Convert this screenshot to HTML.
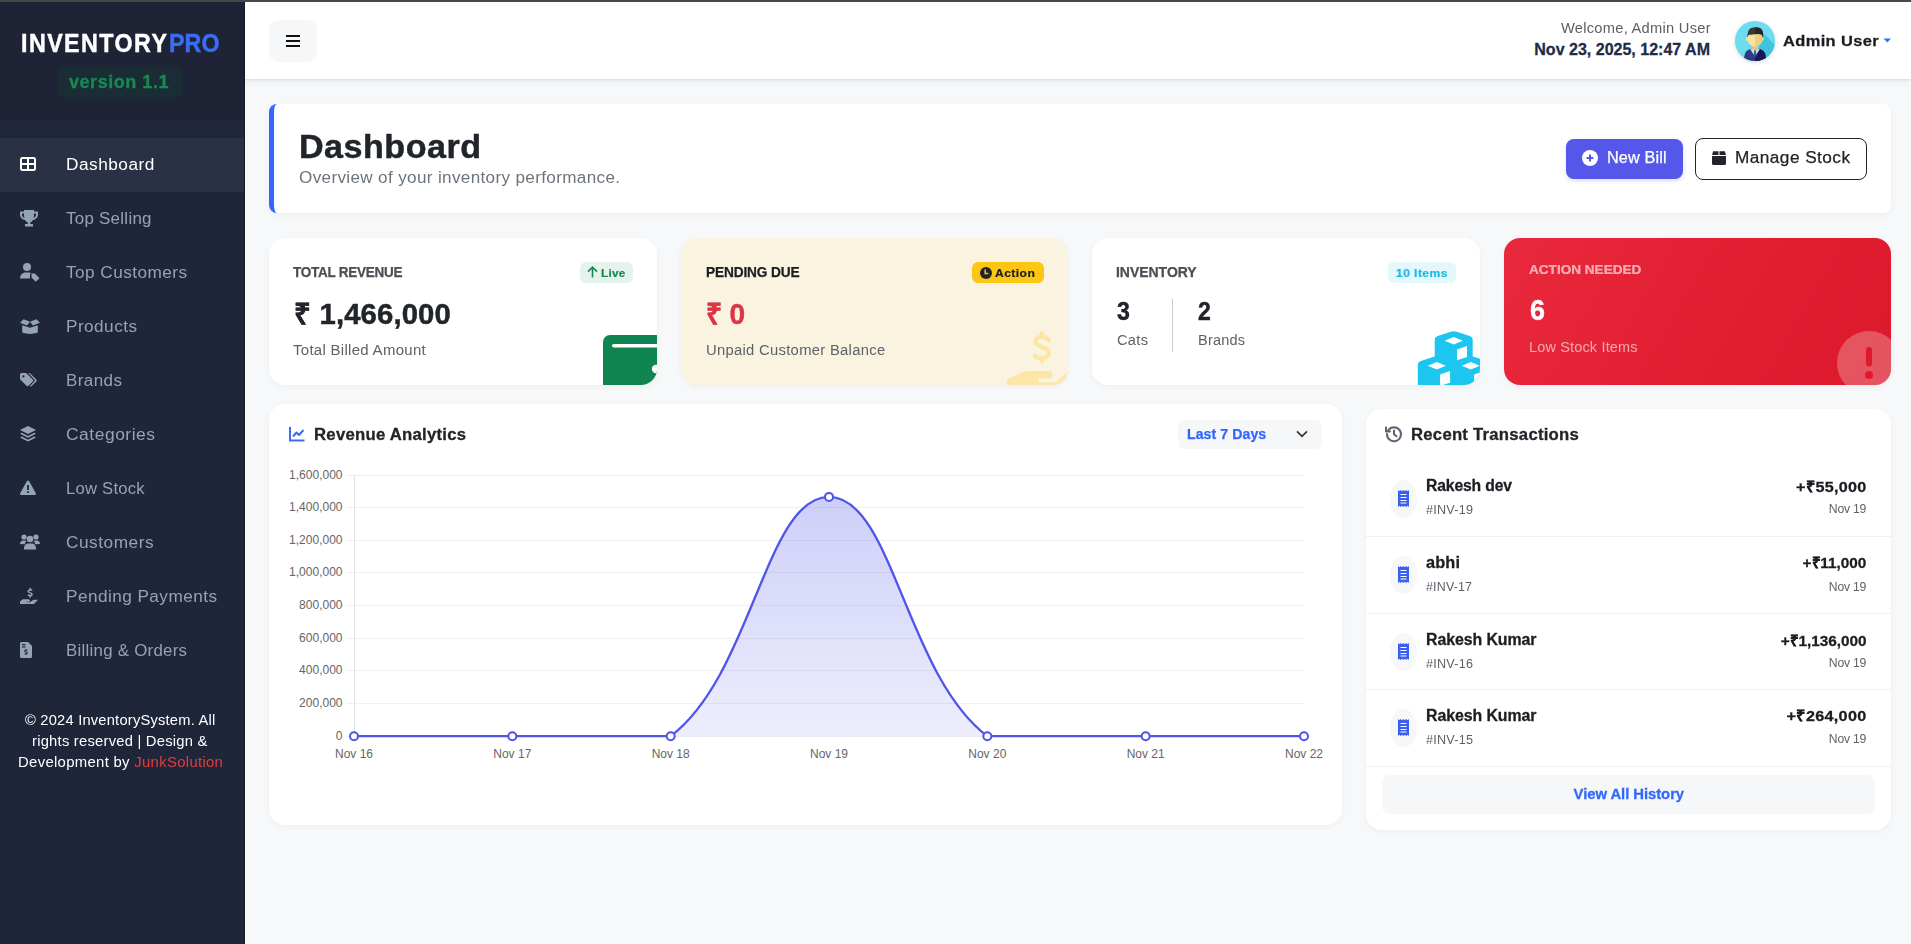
<!DOCTYPE html>
<html><head><meta charset="utf-8">
<style>
*{box-sizing:border-box;margin:0;padding:0}
html,body{width:1911px;height:944px;overflow:hidden;background:#f7f8fa;font-family:"Liberation Sans",sans-serif}
.t{position:absolute;white-space:nowrap;line-height:1;z-index:5}
.b{position:absolute}
#topbar{position:absolute;left:0;top:0;width:1911px;height:2px;background:#474747;z-index:10}
#side{position:absolute;left:0;top:2px;width:245px;height:942px;background:#1f263a;box-shadow:inset -1px 0 0 #141a2c}
#hdr{position:absolute;left:245px;top:2px;width:1666px;height:77px;background:#fff;box-shadow:0 1px 2px rgba(0,0,0,.09),0 3px 9px rgba(0,0,0,.05)}
.card{position:absolute;background:#fff;border-radius:16px;box-shadow:0 2px 6px rgba(0,0,0,.045);overflow:hidden}
svg{position:absolute;display:block;overflow:visible}
</style></head><body>
<div id="topbar"></div>

<!-- SIDEBAR -->
<div id="side"></div>
<div class="b" style="left:0;top:2px;width:244px;height:119px;background:#1e2336"></div>
<div class="b" style="left:0;top:121px;width:244px;height:17px;background:#20273a"></div>
<div class="b" style="left:0;top:138px;width:244px;height:54px;background:#2a3144"></div>
<div class="b" style="left:57px;top:67px;width:126px;height:30px;border-radius:6px;background:#1a2d34"></div>
<svg style='left:20px;top:157px' width='16' height='14' viewBox='0 0 16 14'><rect x='1' y='1' width='14' height='12' rx='1.5' stroke='#fff' stroke-width='2' fill='none'/><path d='M8 1V13M1 7H15' stroke='#fff' stroke-width='2'/></svg>
<svg style='left:20px;top:209.5px' width='18' height='17' viewBox='0 0 18 17' fill='#94a3b8'><path d='M4 0H14V1.5H18V4.5C18 7.5 15.8 9.6 13 10 12.2 11.5 11 12.2 10.2 12.4V14H13V16.5H5V14H7.8V12.4C7 12.2 5.8 11.5 5 10 2.2 9.6 0 7.5 0 4.5V1.5H4ZM2 3.5V4.5C2 6 3 7.5 4.4 7.9 4.1 6.5 4 5 4 3.5ZM16 3.5H14C14 5 13.9 6.5 13.6 7.9 15 7.5 16 6 16 4.5Z'/></svg>
<svg style='left:20px;top:263px' width='20' height='19' viewBox='0 0 20 19' fill='#94a3b8'><circle cx='7' cy='4' r='4'/><path d='M0 15.5C0 12 2.5 9.5 5.5 9.5H9C9.8 9.5 10.5 9.7 11.2 10L10 11.2V15.5ZM11.5 10.5L14.8 10.5 19.5 15.2 15.8 18.8 11.5 14.5Z'/></svg>
<svg style='left:20px;top:318.5px' width='20' height='15' viewBox='0 0 20 15' fill='#94a3b8'><path d='M2.2 6.3L10 8.8 17.8 6.3V12.8Q17.8 13.8 16.8 14.1L10 15 3.2 14.1Q2.2 13.8 2.2 12.8Z'/><path d='M0 3.8L3.6 0.3 10 2.8 7 6.6Z M20 3.8L16.4 0.3 10 2.8 13 6.6Z'/></svg>
<svg style='left:19.8px;top:372.8px' width='17' height='14.5' viewBox='0 0 17 14.5' fill='#94a3b8'><path d='M0 1.5A1.5 1.5 0 0 1 1.5 0H6.2L13 6.8Q13.7 7.5 13 8.2L8.2 13Q7.5 13.7 6.8 13L0 6.2Z'/><path d='M8.3 0H9.8L16.3 6.6Q17.1 7.5 16.3 8.4L10.9 13.8 10 12.9 15.1 7.5Z'/><circle cx='3.4' cy='3.4' r='1.1' fill='#1f263a'/></svg>
<svg style='left:20px;top:426px' width='16' height='16' viewBox='0 0 16 16' fill='#94a3b8'><path d='M8 0L16 4 8 8 0 4Z'/><path d='M1.8 6.8L8 9.9 14.2 6.8 16 7.8 8 11.8 0 7.8Z'/><path d='M1.8 10.6L8 13.7 14.2 10.6 16 11.6 8 15.6 0 11.6Z'/></svg>
<svg style='left:20px;top:480px' width='16' height='15' viewBox='0 0 16 15' fill='#94a3b8'><path d='M8 0.5C8.5 0.5 8.9 0.8 9.2 1.3L15.8 13.2C16.3 14 15.7 15 14.8 15H1.2C0.3 15-0.3 14 0.2 13.2L6.8 1.3C7.1 0.8 7.5 0.5 8 0.5Z'/><rect x='7.1' y='5' width='1.8' height='5' fill='#1f263a'/><rect x='7.1' y='11.2' width='1.8' height='1.8' fill='#1f263a'/></svg>
<svg style='left:20px;top:534px' width='20' height='16' viewBox='0 0 20 16' fill='#94a3b8'><circle cx='4' cy='3' r='2.6'/><circle cx='16' cy='3' r='2.6'/><circle cx='10' cy='5' r='3.3'/><path d='M0 10C0 8 1.3 6.6 3 6.6H5C5.6 6.6 6 6.8 6.4 7 5.5 7.8 5 9 5 10.2Z M15 10.2C15 9 14.5 7.8 13.6 7 14 6.8 14.5 6.6 15 6.6H17C18.7 6.6 20 8 20 10Z M4 14.5C4 11.7 5.8 9.5 8 9.5H12C14.2 9.5 16 11.7 16 14.5V15.5H4Z'/></svg>
<svg style='left:20px;top:588px' width='18' height='16' viewBox='0 0 18 16' fill='#94a3b8'><path d='M9.3 0.7a0.9 0.9 0 0 1 1.8 0v0.6c0.6 0.1 1 0.3 1.4 0.5l-0.5 1.3c-0.7-0.3-1.5-0.5-2-0.4-0.6 0.1-0.9 0.3-0.9 0.7 0 0.4 0.4 0.6 1.4 0.9 1.1 0.3 2.2 0.7 2.2 2.1 0 1-0.7 1.6-1.6 1.8v0.6a0.9 0.9 0 0 1-1.8 0v-0.6c-0.6-0.1-1.2-0.3-1.7-0.5l0.5-1.4c0.6 0.3 1.4 0.5 2 0.5 0.7 0 1-0.3 1-0.6 0-0.4-0.4-0.6-1.3-0.9-1.1-0.3-2.3-0.7-2.3-2.1 0-1 0.7-1.6 1.8-1.8z'/><path d='M0 13.5L2.8 11.2H8.5C9.3 11.2 10 11.8 10 12.5 10 13.2 9.3 13.8 8.5 13.8H6.5L6.5 14.2H9.8L13.5 11.8 18 11.8 14 16H0Z'/></svg>
<svg style='left:20px;top:642px' width='12' height='16' viewBox='0 0 12 16' fill='#94a3b8'><path d='M1.5 0H8L12 4V14.5A1.5 1.5 0 0 1 10.5 16H1.5A1.5 1.5 0 0 1 0 14.5V1.5A1.5 1.5 0 0 1 1.5 0Z'/><g fill='#1f263a'><rect x='2' y='2' width='3.5' height='1.2'/><rect x='2' y='4.3' width='3.5' height='1.2'/><path d='M5.6 7h0.9v0.6c0.4 0.1 0.7 0.2 1 0.3l-0.3 1c-0.4-0.2-0.9-0.3-1.2-0.3-0.4 0-0.6 0.2-0.6 0.4 0 0.3 0.3 0.4 0.9 0.6 0.8 0.2 1.5 0.5 1.5 1.4 0 0.7-0.5 1.1-1.3 1.3v0.6h-0.9v-0.6c-0.4-0.1-0.9-0.2-1.2-0.4l0.3-1c0.4 0.2 1 0.4 1.3 0.4 0.5 0 0.7-0.2 0.7-0.4 0-0.3-0.3-0.4-0.9-0.6-0.8-0.2-1.5-0.5-1.5-1.4 0-0.7 0.5-1.1 1.3-1.3z'/></g></svg>

<!-- HEADER -->
<div id="hdr"></div>
<div class="b" style="left:269px;top:20px;width:48px;height:42px;border-radius:10px;background:#f6f7f9"></div>
<div class="b" style="left:286px;top:34.5px;width:14px;height:2px;background:#111"></div>
<div class="b" style="left:286px;top:39.5px;width:14px;height:2px;background:#111"></div>
<div class="b" style="left:286px;top:44.5px;width:14px;height:2px;background:#111"></div>
<svg style='left:1735px;top:21px;filter:drop-shadow(0 1px 2px rgba(0,0,0,.15))' width='40' height='40' viewBox='0 0 40 40'>
<defs><clipPath id='avc'><circle cx='20' cy='20' r='20'/></clipPath></defs>
<g clip-path='url(#avc)'>
<rect width='40' height='40' fill='#6cdcee'/>
<path d='M25 9L46 30V46H22Z' fill='#3ec4db'/>
<path d='M9 40C9 32 11 29.5 15 28.3L20 27 25 28.3C29 29.5 31 32 31 40Z' fill='#2e3a84'/>
<path d='M20 27L25 28.3C29 29.5 31 32 31 40H20Z' fill='#1c1856'/>
<path d='M15.3 28.4L20 26.6 24.7 28.4 20 35.5Z' fill='#c5e2ea'/>
<path d='M19.2 29H20.8L21.3 34.5 20 36.5 18.7 34.5Z' fill='#3a5aa6'/>
<path d='M17.3 23H23V28.2L20 29.6 17.3 28.2Z' fill='#f0bf78'/>
<circle cx='12.8' cy='18' r='1.9' fill='#fbe39b'/><circle cx='27.2' cy='18' r='1.9' fill='#ebcf86'/>
<path d='M13 15.5C13 11.5 16 9.5 20 9.5 24 9.5 27 11.5 27 15.5V19C27 22.5 24 25.5 20 25.5 16 25.5 13 22.5 13 19Z' fill='#fbe39b'/>
<path d='M20 9.5C24 9.5 27 11.5 27 15.5V19C27 22.5 24 25.5 20 25.5Z' fill='#ebcf86'/>
<path d='M12.6 16.5C12.2 11 14 7.5 17 6.8 19 6 22 6 24 6.8 27.5 8 28.5 11 28 16.5L27 14C25.5 13 23 12.8 20 13.2 17 13.6 14.5 13.6 13.5 14Z' fill='#373737'/>
<path d='M20 6.2C21.5 6.2 23 6.4 24 6.8 27.5 8 28.5 11 28 16.5L27 14C25.5 13 23 12.8 20 13.2Z' fill='#262626'/>
</g></svg>
<svg style="left:1883px;top:38px" width="9" height="5" viewBox="0 0 9 5"><path d="M0.5 0.5 L8 0.5 L4.25 4.5Z" fill="#3a6cf4"/></svg>

<!-- PAGE HEADER -->
<div class="card" style="left:269px;top:104px;width:1622px;height:109px;border-radius:8px;border-left:5px solid #3366ff"></div>
<div class="b" style="left:1566px;top:139px;width:117px;height:40px;border-radius:8px;background:#5457e9;box-shadow:0 2px 4px rgba(84,87,233,.2)"></div>
<svg style="left:1582px;top:150px" width="16" height="16" viewBox="0 0 16 16"><circle cx="8" cy="8" r="8" fill="#fff"/><path d="M8 4.6v6.8M4.6 8h6.8" stroke="#5457e9" stroke-width="2"/></svg>
<div class="b" style="left:1695px;top:138px;width:172px;height:42px;border-radius:8px;border:1.3px solid #212529;background:#fff"></div>
<svg style="left:1712px;top:151px" width="14" height="14" viewBox="0 0 14 14"><path d="M0 5h14v7.5a1.5 1.5 0 0 1-1.5 1.5h-11A1.5 1.5 0 0 1 0 12.5z" fill="#212529"/><path d="M1.2 0.2h5.3v3.8H0z M7.5 0.2h5.3L14 4H7.5z" fill="#212529"/></svg>

<!-- STAT CARDS -->
<div class="card" style="left:269px;top:238px;width:388px;height:147px">
  <svg style="left:334px;top:97px" width="60" height="52" viewBox="0 0 60 52"><path d="M7 0H60V52H0V7A7 7 0 0 1 7 0Z" fill="#0f8552"/><rect x="9" y="9" width="51" height="3.5" rx="1.75" fill="#fff"/><circle cx="53" cy="34" r="4.2" fill="#fff"/></svg>
</div>
<div class="card" style="left:681px;top:238px;width:387px;height:147px;background:#faf3e0">
  <svg style="left:0;top:0" width="387" height="147" viewBox="0 0 387 147"><g stroke="#fbe6a6" stroke-width="4.4" fill="none" stroke-linecap="round"><path d="M367.6 102.2C365.8 99.8 363.3 98.6 360.8 98.6 357.2 98.6 354.6 100.6 354.6 103.6 354.6 106.8 357.6 107.9 361 108.9 364.8 110 367.8 111.4 367.8 115 367.8 118.2 364.8 120.2 361 120.2 358.2 120.2 355.6 119.2 353.8 117.6"/><path d="M361 95.4V98.6M361 120.2V123.6"/></g><path d="M345 133.1H367.5A3.75 3.75 0 0 1 367.5 140.6H357.5V144.6H374.6L387 133.5V147H326V141.3Z" fill="#fbe6a6"/></svg>
</div>
<div class="card" style="left:1092px;top:238px;width:388px;height:147px">
  <svg style='left:0;top:0' width='388' height='147' viewBox='0 0 388 147'><path d='M342.7 102Q342.7 99 345.7 98L358.7 93.7Q361.7 92.7 364.7 93.7L377.7 98Q380.7 99 380.7 102V124L361.7 133L342.7 124Z' fill='#1cc6ef'/><path d='M352.7 102.8L361.7 99L370.7 102.8L361.7 106.6Z M365.0 111.6L375.0 107.9V119.8L365.0 122.8Z' fill='#fff'/><path d='M325.8 127Q325.8 124 328.8 123L341.8 118.7Q344.8 117.7 347.8 118.7L360.8 123Q363.8 124 363.8 127V149L344.8 158L325.8 149Z' fill='#1cc6ef'/><path d='M359.8 127Q359.8 124 362.8 123L375.8 118.7Q378.8 117.7 381.8 118.7L394.8 123Q397.8 124 397.8 127V149L378.8 158L359.8 149Z' fill='#1cc6ef'/><path d='M335.8 127.8L344.8 124L353.8 127.8L344.8 131.6Z M348.1 136.6L358.1 132.9V144.8L348.1 147.8Z' fill='#fff'/><path d='M369.8 127.8L378.8 124L387.8 127.8L378.8 131.6Z M382.1 136.6L392.1 132.9V144.8L382.1 147.8Z' fill='#fff'/></svg>
</div>
<div class="card" style="left:1504px;top:238px;width:387px;height:147px;background:linear-gradient(120deg,#e9293d 0%,#e21e31 55%,#dc1a2c 100%)">
  <svg style="left:333px;top:93px" width="64" height="64" viewBox="0 0 64 64"><circle cx="32" cy="32" r="32" fill="rgba(255,255,255,.25)"/><rect x="29" y="16" width="6" height="19.5" rx="3" fill="#dc1a2c"/><circle cx="32" cy="44" r="4" fill="#dc1a2c"/></svg>
</div>
<div class="b" style="left:580px;top:262px;width:53px;height:21px;border-radius:6px;background:#e4f3ec"></div>
<svg style="left:587px;top:266px" width="11" height="12" viewBox="0 0 11 12"><path d="M5.5 1.2V11.5M1 5.6L5.5 1.2 10 5.6" stroke="#198754" stroke-width="1.6" fill="none"/></svg>
<div class="b" style="left:972px;top:262px;width:72px;height:21px;border-radius:6px;background:#fdc612"></div>
<svg style="left:980px;top:266.5px" width="12" height="12" viewBox="0 0 12 12"><circle cx="6" cy="6" r="6" fill="#212529"/><path d="M5.2 2.5V6.6H8.2" stroke="#fdc612" stroke-width="1.5" fill="none"/></svg>
<div class="b" style="left:1388px;top:262px;width:68px;height:21px;border-radius:6px;background:#e4f7fc"></div>
<div class="b" style="left:1172px;top:299px;width:1px;height:53px;background:#c9ccd1"></div>

<!-- CHART -->
<div class="card" style="left:269px;top:404px;width:1073px;height:421px"></div>
<svg style="left:289px;top:426px" width="16" height="16" viewBox="0 0 16 16"><path d="M1 1V14.5H15.5" stroke="#3a6cf4" stroke-width="2" fill="none"/><path d="M4 10.5L7.5 6.5 10 9 14.5 4" stroke="#3a6cf4" stroke-width="2" fill="none" stroke-linejoin="round"/></svg>
<div class="b" style="left:1178px;top:420px;width:144px;height:29px;border-radius:6px;background:#f6f7f9"></div>
<svg style="left:1296px;top:430px" width="12" height="8" viewBox="0 0 12 8"><path d="M1 1.3L6 6.3 11 1.3" stroke="#333" stroke-width="1.7" fill="none"/></svg>
<svg style='left:0;top:0;z-index:3' width='1911' height='944' viewBox='0 0 1911 944'>
<defs><linearGradient id='fg' x1='0' y1='0' x2='0' y2='1' gradientUnits='objectBoundingBox'><stop offset='0' stop-color='#4f53e6' stop-opacity='.28'/><stop offset='1' stop-color='#4f53e6' stop-opacity='.1'/></linearGradient></defs>
<path d='M346 475.5 H1304' stroke='#edf0f5' stroke-width='1'/>
<path d='M346 507.5 H1304' stroke='#edf0f5' stroke-width='1'/>
<path d='M346 540.5 H1304' stroke='#edf0f5' stroke-width='1'/>
<path d='M346 572.5 H1304' stroke='#edf0f5' stroke-width='1'/>
<path d='M346 605.5 H1304' stroke='#edf0f5' stroke-width='1'/>
<path d='M346 638.5 H1304' stroke='#edf0f5' stroke-width='1'/>
<path d='M346 670.5 H1304' stroke='#edf0f5' stroke-width='1'/>
<path d='M346 703.5 H1304' stroke='#edf0f5' stroke-width='1'/>
<path d='M346 736.5 H1304' stroke='#edf0f5' stroke-width='1'/>
<path d='M354.5 475 V736.7' stroke='#e1e3e6' stroke-width='1'/>
<path d='M354.00 736.20 C417.33 736.20 449.00 736.20 512.33 736.20 C575.67 736.20 625.63 736.20 670.67 736.20 C752.29 674.51 765.67 496.88 829.00 496.88 C892.33 496.88 905.70 674.51 987.33 736.20 C1032.37 736.20 1082.33 736.20 1145.66 736.20 C1209.00 736.20 1240.66 736.20 1304.00 736.20 L1304.00 736.2 L354.00 736.2 Z' fill='url(#fg)'/>
<path d='M354.00 736.20 C417.33 736.20 449.00 736.20 512.33 736.20 C575.67 736.20 625.63 736.20 670.67 736.20 C752.29 674.51 765.67 496.88 829.00 496.88 C892.33 496.88 905.70 674.51 987.33 736.20 C1032.37 736.20 1082.33 736.20 1145.66 736.20 C1209.00 736.20 1240.66 736.20 1304.00 736.20' stroke='#4f55e8' stroke-width='2.3' fill='none'/>
<circle cx='354.00' cy='736.20' r='4' fill='#fff' stroke='#4f53e6' stroke-width='2'/>
<circle cx='512.33' cy='736.20' r='4' fill='#fff' stroke='#4f53e6' stroke-width='2'/>
<circle cx='670.67' cy='736.20' r='4' fill='#fff' stroke='#4f53e6' stroke-width='2'/>
<circle cx='829.00' cy='496.88' r='4' fill='#fff' stroke='#4f53e6' stroke-width='2'/>
<circle cx='987.33' cy='736.20' r='4' fill='#fff' stroke='#4f53e6' stroke-width='2'/>
<circle cx='1145.66' cy='736.20' r='4' fill='#fff' stroke='#4f53e6' stroke-width='2'/>
<circle cx='1304.00' cy='736.20' r='4' fill='#fff' stroke='#4f53e6' stroke-width='2'/>
</svg>
<div class='t' style='right:1568.5px;top:468.5px;font-size:12px;color:#666'>1,600,000</div>
<div class='t' style='right:1568.5px;top:501.1px;font-size:12px;color:#666'>1,400,000</div>
<div class='t' style='right:1568.5px;top:533.8px;font-size:12px;color:#666'>1,200,000</div>
<div class='t' style='right:1568.5px;top:566.4px;font-size:12px;color:#666'>1,000,000</div>
<div class='t' style='right:1568.5px;top:599.0px;font-size:12px;color:#666'>800,000</div>
<div class='t' style='right:1568.5px;top:631.6px;font-size:12px;color:#666'>600,000</div>
<div class='t' style='right:1568.5px;top:664.2px;font-size:12px;color:#666'>400,000</div>
<div class='t' style='right:1568.5px;top:696.9px;font-size:12px;color:#666'>200,000</div>
<div class='t' style='right:1568.5px;top:729.5px;font-size:12px;color:#666'>0</div>
<div class='t' style='left:294.0px;width:120px;text-align:center;top:747.5px;font-size:12px;color:#666'>Nov 16</div>
<div class='t' style='left:452.3px;width:120px;text-align:center;top:747.5px;font-size:12px;color:#666'>Nov 17</div>
<div class='t' style='left:610.7px;width:120px;text-align:center;top:747.5px;font-size:12px;color:#666'>Nov 18</div>
<div class='t' style='left:769.0px;width:120px;text-align:center;top:747.5px;font-size:12px;color:#666'>Nov 19</div>
<div class='t' style='left:927.3px;width:120px;text-align:center;top:747.5px;font-size:12px;color:#666'>Nov 20</div>
<div class='t' style='left:1085.7px;width:120px;text-align:center;top:747.5px;font-size:12px;color:#666'>Nov 21</div>
<div class='t' style='left:1244.0px;width:120px;text-align:center;top:747.5px;font-size:12px;color:#666'>Nov 22</div>

<!-- TRANSACTIONS -->
<div class="card" style="left:1366px;top:409px;width:525px;height:421px"></div>
<svg style="left:1385px;top:425px" width="18" height="18" viewBox="0 0 18 18"><path d="M3.3 5.2A7 7 0 1 1 2 9" stroke="#5b6470" stroke-width="2" fill="none" stroke-linecap="round"/><path d="M1 2.5V6.5H5" stroke="#5b6470" stroke-width="2" fill="none" stroke-linecap="round" stroke-linejoin="round"/><path d="M9 5.5V9.3L11.5 11.3" stroke="#5b6470" stroke-width="2" fill="none" stroke-linecap="round"/></svg>
<div class='b' style='left:1390px;top:479.5px;width:27px;height:38px;border-radius:50%;background:#f6f7f9'></div>
<svg style='left:1398px;top:489.5px' width='11' height='17' viewBox='0 0 11 17'><path d='M0 0L1.4 1.2 2.75 0 4.1 1.2 5.5 0 6.9 1.2 8.25 0 9.6 1.2 11 0V17L9.6 15.8 8.25 17 6.9 15.8 5.5 17 4.1 15.8 2.75 17 1.4 15.8 0 17Z' fill='#3a5ef0'/><path d='M2.5 4.5H8.5M2.5 7.5H8.5M2.5 10.5H8.5M2.5 13H8.5' stroke='#fff' stroke-width='1.2'/></svg>
<div class='b' style='left:1366px;top:536px;width:525px;height:1px;background:#eef1f4'></div>
<div class='b' style='left:1390px;top:556px;width:27px;height:38px;border-radius:50%;background:#f6f7f9'></div>
<svg style='left:1398px;top:566px' width='11' height='17' viewBox='0 0 11 17'><path d='M0 0L1.4 1.2 2.75 0 4.1 1.2 5.5 0 6.9 1.2 8.25 0 9.6 1.2 11 0V17L9.6 15.8 8.25 17 6.9 15.8 5.5 17 4.1 15.8 2.75 17 1.4 15.8 0 17Z' fill='#3a5ef0'/><path d='M2.5 4.5H8.5M2.5 7.5H8.5M2.5 10.5H8.5M2.5 13H8.5' stroke='#fff' stroke-width='1.2'/></svg>
<div class='b' style='left:1366px;top:613px;width:525px;height:1px;background:#eef1f4'></div>
<div class='b' style='left:1390px;top:632.5px;width:27px;height:38px;border-radius:50%;background:#f6f7f9'></div>
<svg style='left:1398px;top:642.5px' width='11' height='17' viewBox='0 0 11 17'><path d='M0 0L1.4 1.2 2.75 0 4.1 1.2 5.5 0 6.9 1.2 8.25 0 9.6 1.2 11 0V17L9.6 15.8 8.25 17 6.9 15.8 5.5 17 4.1 15.8 2.75 17 1.4 15.8 0 17Z' fill='#3a5ef0'/><path d='M2.5 4.5H8.5M2.5 7.5H8.5M2.5 10.5H8.5M2.5 13H8.5' stroke='#fff' stroke-width='1.2'/></svg>
<div class='b' style='left:1366px;top:689px;width:525px;height:1px;background:#eef1f4'></div>
<div class='b' style='left:1390px;top:709px;width:27px;height:38px;border-radius:50%;background:#f6f7f9'></div>
<svg style='left:1398px;top:719px' width='11' height='17' viewBox='0 0 11 17'><path d='M0 0L1.4 1.2 2.75 0 4.1 1.2 5.5 0 6.9 1.2 8.25 0 9.6 1.2 11 0V17L9.6 15.8 8.25 17 6.9 15.8 5.5 17 4.1 15.8 2.75 17 1.4 15.8 0 17Z' fill='#3a5ef0'/><path d='M2.5 4.5H8.5M2.5 7.5H8.5M2.5 10.5H8.5M2.5 13H8.5' stroke='#fff' stroke-width='1.2'/></svg>
<div class='b' style='left:1366px;top:766px;width:525px;height:1px;background:#eef1f4'></div>
<div class="b" style="left:1382px;top:775px;width:493px;height:39px;border-radius:8px;background:#f6f7f9"></div>

<div class='t' style='top:30.8px;font-size:25px;font-weight:700;color:#ffffff;letter-spacing:1.563px;-webkit-text-stroke:0.45px #ffffff;transform:scaleX(0.9300);left:20.5px;transform-origin:0 0;'>INVENTORY</div>
<div class='t' style='top:30.8px;font-size:25px;font-weight:700;color:#3a6cf4;letter-spacing:0.057px;-webkit-text-stroke:0.45px #3a6cf4;transform:scaleX(0.9300);left:168.6px;transform-origin:0 0;'>PRO</div>
<div class='t' style='top:71.9px;font-size:19px;font-weight:700;color:#198754;letter-spacing:0.546px;-webkit-text-stroke:0.34px #198754;transform:scaleX(0.9500);left:69.0px;transform-origin:0 0;'>version 1.1</div>
<div class='t' style='top:156.5px;font-size:16px;font-weight:500;color:#ffffff;letter-spacing:0.470px;transform:scaleX(1.0776);left:65.8px;transform-origin:0 0;'>Dashboard</div>
<div class='t' style='top:210.5px;font-size:16px;font-weight:400;color:#94a3b8;letter-spacing:0.274px;transform:scaleX(1.0553);left:65.5px;transform-origin:0 0;'>Top Selling</div>
<div class='t' style='top:264.5px;font-size:16px;font-weight:400;color:#94a3b8;letter-spacing:0.416px;transform:scaleX(1.0748);left:65.5px;transform-origin:0 0;'>Top Customers</div>
<div class='t' style='top:318.5px;font-size:16px;font-weight:400;color:#94a3b8;letter-spacing:0.418px;transform:scaleX(1.0747);left:65.5px;transform-origin:0 0;'>Products</div>
<div class='t' style='top:372.5px;font-size:16px;font-weight:400;color:#94a3b8;letter-spacing:0.399px;transform:scaleX(1.0627);left:65.5px;transform-origin:0 0;'>Brands</div>
<div class='t' style='top:426.5px;font-size:16px;font-weight:400;color:#94a3b8;letter-spacing:0.474px;transform:scaleX(1.0901);left:65.5px;transform-origin:0 0;'>Categories</div>
<div class='t' style='top:480.5px;font-size:16px;font-weight:400;color:#94a3b8;letter-spacing:0.230px;transform:scaleX(1.0389);left:65.5px;transform-origin:0 0;'>Low Stock</div>
<div class='t' style='top:534.5px;font-size:16px;font-weight:400;color:#94a3b8;letter-spacing:0.474px;transform:scaleX(1.0794);left:65.5px;transform-origin:0 0;'>Customers</div>
<div class='t' style='top:588.5px;font-size:16px;font-weight:400;color:#94a3b8;letter-spacing:0.414px;transform:scaleX(1.0745);left:65.5px;transform-origin:0 0;'>Pending Payments</div>
<div class='t' style='top:642.5px;font-size:16px;font-weight:400;color:#94a3b8;letter-spacing:0.249px;transform:scaleX(1.0531);left:65.5px;transform-origin:0 0;'>Billing &amp; Orders</div>
<div class='t' style='top:713.1px;font-size:14px;font-weight:400;color:#ffffff;letter-spacing:0.207px;transform:scaleX(1.0481);left:25.3px;transform-origin:0 0;'>© 2024 InventorySystem. All</div>
<div class='t' style='top:733.9px;font-size:14px;font-weight:400;color:#ffffff;letter-spacing:0.221px;transform:scaleX(1.0544);left:32.4px;transform-origin:0 0;'>rights reserved | Design &amp;</div>
<div class='t' style='top:754.9px;font-size:14px;font-weight:400;color:#ffffff;letter-spacing:0.284px;transform:scaleX(1.0637);left:17.6px;transform-origin:0 0;'>Development by <span style='color:#e53a40'>JunkSolution</span></div>
<div class='t' style='top:21.0px;font-size:14px;font-weight:400;color:#5c6168;letter-spacing:0.241px;transform:scaleX(1.0493);right:200.35px;transform-origin:100% 0;'>Welcome, Admin User</div>
<div class='t' style='top:42.3px;font-size:16px;font-weight:700;color:#1f2c47;letter-spacing:0.010px;-webkit-text-stroke:0.29px #1f2c47;right:200.99px;transform-origin:100% 0;'>Nov 23, 2025, 12:47 AM</div>
<div class='t' style='top:32.6px;font-size:15.5px;font-weight:700;color:#1a1d21;letter-spacing:0.365px;-webkit-text-stroke:0.28px #1a1d21;transform:scaleX(1.0600);left:1783.2px;transform-origin:0 0;'>Admin User</div>
<div class='t' style='top:130.4px;font-size:33px;font-weight:700;color:#212529;letter-spacing:0.466px;-webkit-text-stroke:0.45px #212529;transform:scaleX(1.0335);left:299.2px;transform-origin:0 0;'>Dashboard</div>
<div class='t' style='top:169.6px;font-size:16px;font-weight:400;color:#6c757d;letter-spacing:0.324px;transform:scaleX(1.0685);left:298.8px;transform-origin:0 0;'>Overview of your inventory performance.</div>
<div class='t' style='top:150.3px;font-size:16px;font-weight:400;color:#ffffff;letter-spacing:0.101px;transform:scaleX(1.0187);left:1606.8px;transform-origin:0 0;-webkit-text-stroke:0.25px #fff;'>New Bill</div>
<div class='t' style='top:150.3px;font-size:16px;font-weight:400;color:#212529;letter-spacing:0.430px;transform:scaleX(1.0746);left:1734.7px;transform-origin:0 0;-webkit-text-stroke:0.25px #212529;'>Manage Stock</div>
<div class='t' style='top:265.0px;font-size:14px;font-weight:700;color:#4a4f55;letter-spacing:-0.245px;-webkit-text-stroke:0.25px #4a4f55;transform:scaleX(0.9636);left:293.3px;transform-origin:0 0;'>TOTAL REVENUE</div>
<div class='t' style='top:300.2px;font-size:29px;font-weight:700;color:#212529;letter-spacing:0.108px;-webkit-text-stroke:0.45px #212529;transform:scaleX(1.0106);left:293.9px;transform-origin:0 0;'>₹ 1,466,000</div>
<div class='t' style='top:342.9px;font-size:14px;font-weight:400;color:#5d6269;letter-spacing:0.283px;transform:scaleX(1.0686);left:293.3px;transform-origin:0 0;'>Total Billed Amount</div>
<div class='t' style='top:265.0px;font-size:14px;font-weight:700;color:#1a1d21;letter-spacing:-0.149px;-webkit-text-stroke:0.25px #1a1d21;transform:scaleX(0.9776);left:705.6px;transform-origin:0 0;'>PENDING DUE</div>
<div class='t' style='top:300.3px;font-size:29px;font-weight:700;color:#dc3545;letter-spacing:-0.409px;-webkit-text-stroke:0.45px #dc3545;transform:scaleX(0.9710);left:706.0px;transform-origin:0 0;'>₹ 0</div>
<div class='t' style='top:343.1px;font-size:14px;font-weight:400;color:#5d6269;letter-spacing:0.270px;transform:scaleX(1.0576);left:705.8px;transform-origin:0 0;'>Unpaid Customer Balance</div>
<div class='t' style='top:265.0px;font-size:14px;font-weight:700;color:#4a4f55;letter-spacing:-0.015px;-webkit-text-stroke:0.25px #4a4f55;transform:scaleX(0.9977);left:1116.4px;transform-origin:0 0;'>INVENTORY</div>
<div class='t' style='top:299.3px;font-size:25px;font-weight:700;color:#212529;letter-spacing:-0.737px;-webkit-text-stroke:0.45px #212529;transform:scaleX(0.9264);left:1117.0px;transform-origin:0 0;'>3</div>
<div class='t' style='top:299.3px;font-size:25px;font-weight:700;color:#212529;letter-spacing:-0.784px;-webkit-text-stroke:0.45px #212529;transform:scaleX(0.9221);left:1197.9px;transform-origin:0 0;'>2</div>
<div class='t' style='top:332.9px;font-size:14px;font-weight:400;color:#5d6269;letter-spacing:0.281px;transform:scaleX(1.0459);left:1117.0px;transform-origin:0 0;'>Cats</div>
<div class='t' style='top:332.9px;font-size:14px;font-weight:400;color:#5d6269;letter-spacing:0.211px;transform:scaleX(1.0371);left:1197.9px;transform-origin:0 0;'>Brands</div>
<div class='t' style='top:263.3px;font-size:13.5px;font-weight:700;color:rgba(255,255,255,.6);letter-spacing:0.018px;-webkit-text-stroke:0.24px rgba(255,255,255,.6);transform:scaleX(1.0029);left:1528.5px;transform-origin:0 0;'>ACTION NEEDED</div>
<div class='t' style='top:296.0px;font-size:29px;font-weight:700;color:#ffffff;letter-spacing:-0.837px;-webkit-text-stroke:0.45px #ffffff;transform:scaleX(0.9279);left:1530.0px;transform-origin:0 0;'>6</div>
<div class='t' style='top:339.9px;font-size:14px;font-weight:400;color:rgba(255,255,255,.6);letter-spacing:0.160px;transform:scaleX(1.0339);left:1528.5px;transform-origin:0 0;'>Low Stock Items</div>
<div class='t' style='top:267.5px;font-size:11px;font-weight:700;color:#198754;letter-spacing:0.275px;-webkit-text-stroke:0.20px #198754;transform:scaleX(1.0595);left:601.0px;transform-origin:0 0;'>Live</div>
<div class='t' style='top:267.5px;font-size:11px;font-weight:700;color:#1a1d21;letter-spacing:0.406px;-webkit-text-stroke:0.20px #1a1d21;transform:scaleX(1.0975);left:995.2px;transform-origin:0 0;'>Action</div>
<div class='t' style='top:267.5px;font-size:11px;font-weight:700;color:#17bde8;letter-spacing:0.383px;-webkit-text-stroke:0.20px #17bde8;transform:scaleX(1.1004);left:1395.8px;transform-origin:0 0;'>10 Items</div>
<div class='t' style='top:426.5px;font-size:16px;font-weight:700;color:#212529;letter-spacing:0.249px;-webkit-text-stroke:0.29px #212529;transform:scaleX(1.0441);left:313.9px;transform-origin:0 0;'>Revenue Analytics</div>
<div class='t' style='top:427.0px;font-size:14px;font-weight:700;color:#3366ff;letter-spacing:0.054px;-webkit-text-stroke:0.25px #3366ff;transform:scaleX(1.0106);left:1186.8px;transform-origin:0 0;'>Last 7 Days</div>
<div class='t' style='top:426.5px;font-size:16px;font-weight:700;color:#212529;letter-spacing:0.241px;-webkit-text-stroke:0.29px #212529;transform:scaleX(1.0433);left:1410.5px;transform-origin:0 0;'>Recent Transactions</div>
<div class='t' style='top:478.3px;font-size:16px;font-weight:700;color:#1a1d21;letter-spacing:-0.133px;-webkit-text-stroke:0.29px #1a1d21;transform:scaleX(0.9802);left:1425.8px;transform-origin:0 0;'>Rakesh dev</div>
<div class='t' style='top:503.8px;font-size:12px;font-weight:400;color:#5d6269;letter-spacing:0.231px;transform:scaleX(1.0504);left:1425.5px;transform-origin:0 0;'>#INV-19</div>
<div class='t' style='top:478.7px;font-size:15.5px;font-weight:700;color:#1a1d21;letter-spacing:0.264px;-webkit-text-stroke:0.28px #1a1d21;transform:scaleX(1.0443);right:44.42px;transform-origin:100% 0;'>+₹55,000</div>
<div class='t' style='top:503.2px;font-size:12.8px;font-weight:400;color:#5d6269;letter-spacing:-0.273px;transform:scaleX(0.9520);right:44.96px;transform-origin:100% 0;'>Nov 19</div>
<div class='t' style='top:554.8px;font-size:16px;font-weight:700;color:#1a1d21;letter-spacing:0.145px;-webkit-text-stroke:0.29px #1a1d21;transform:scaleX(1.0202);left:1425.8px;transform-origin:0 0;'>abhi</div>
<div class='t' style='top:581.3px;font-size:12px;font-weight:400;color:#5d6269;letter-spacing:0.170px;transform:scaleX(1.0365);left:1425.5px;transform-origin:0 0;'>#INV-17</div>
<div class='t' style='top:555.2px;font-size:15.5px;font-weight:700;color:#1a1d21;letter-spacing:-0.058px;-webkit-text-stroke:0.28px #1a1d21;transform:scaleX(0.9906);right:44.76px;transform-origin:100% 0;'>+₹11,000</div>
<div class='t' style='top:580.7px;font-size:12.8px;font-weight:400;color:#5d6269;letter-spacing:-0.273px;transform:scaleX(0.9520);right:44.96px;transform-origin:100% 0;'>Nov 19</div>
<div class='t' style='top:632.3px;font-size:16px;font-weight:700;color:#1a1d21;letter-spacing:-0.057px;-webkit-text-stroke:0.29px #1a1d21;transform:scaleX(0.9917);left:1425.8px;transform-origin:0 0;'>Rakesh Kumar</div>
<div class='t' style='top:657.8px;font-size:12px;font-weight:400;color:#5d6269;letter-spacing:0.231px;transform:scaleX(1.0504);left:1425.5px;transform-origin:0 0;'>#INV-16</div>
<div class='t' style='top:632.7px;font-size:15.5px;font-weight:700;color:#1a1d21;letter-spacing:-0.057px;-webkit-text-stroke:0.28px #1a1d21;transform:scaleX(0.9902);right:44.76px;transform-origin:100% 0;'>+₹1,136,000</div>
<div class='t' style='top:657.2px;font-size:12.8px;font-weight:400;color:#5d6269;letter-spacing:-0.273px;transform:scaleX(0.9520);right:44.96px;transform-origin:100% 0;'>Nov 19</div>
<div class='t' style='top:707.8px;font-size:16px;font-weight:700;color:#1a1d21;letter-spacing:-0.057px;-webkit-text-stroke:0.29px #1a1d21;transform:scaleX(0.9917);left:1425.8px;transform-origin:0 0;'>Rakesh Kumar</div>
<div class='t' style='top:733.8px;font-size:12px;font-weight:400;color:#5d6269;letter-spacing:0.231px;transform:scaleX(1.0504);left:1425.5px;transform-origin:0 0;'>#INV-15</div>
<div class='t' style='top:708.2px;font-size:15.5px;font-weight:700;color:#1a1d21;letter-spacing:0.273px;-webkit-text-stroke:0.28px #1a1d21;transform:scaleX(1.0462);right:44.41px;transform-origin:100% 0;'>+₹264,000</div>
<div class='t' style='top:733.2px;font-size:12.8px;font-weight:400;color:#5d6269;letter-spacing:-0.273px;transform:scaleX(0.9520);right:44.96px;transform-origin:100% 0;'>Nov 19</div>
<div class='t' style='top:786.0px;font-size:15px;font-weight:700;color:#3366ff;letter-spacing:-0.055px;-webkit-text-stroke:0.27px #3366ff;transform:scaleX(0.9891);left:1572.59px;transform-origin:50% 0;'>View All History</div>
</body></html>
